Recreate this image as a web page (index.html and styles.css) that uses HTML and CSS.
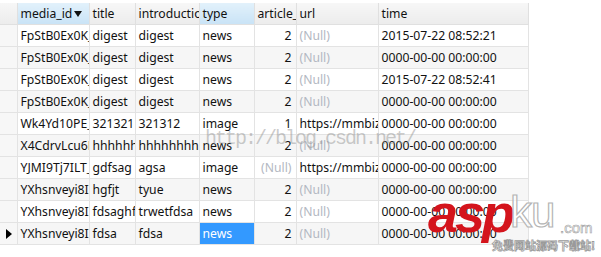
FILE: index.html
```html
<!DOCTYPE html>
<html lang="zh-CN">
<head>
    <meta charset="UTF-8">
    <title>wx_material</title>
    <link rel="stylesheet" href="styles.css">
</head>
<body>
    <div class="grid-view">
        <table class="data-grid">
            <colgroup>
                <col class="c-ind">
                <col class="c-media">
                <col class="c-title">
                <col class="c-intro">
                <col class="c-type">
                <col class="c-article">
                <col class="c-url">
                <col class="c-time">
                <col class="c-rest">
            </colgroup>
            <thead>
                <tr>
                    <th class="ind"></th>
                    <th class="sorted">media_id<span class="sort-arrow"></span></th>
                    <th>title</th>
                    <th>introduction</th>
                    <th class="sorted">type</th>
                    <th>article_id</th>
                    <th>url</th>
                    <th>time</th>
                    <th class="rest"></th>
                </tr>
            </thead>
            <tbody>
                <tr>
                    <td class="ind"></td><td>FpStB0Ex0K_sWq2</td><td>digest</td><td>digest</td><td>news</td>
                    <td class="num">2</td><td class="null">(Null)</td><td>2015-07-22 08:52:21</td><td class="rest"></td>
                </tr>
                <tr>
                    <td class="ind"></td><td>FpStB0Ex0K_sWq2</td><td>digest</td><td>digest</td><td>news</td>
                    <td class="num">2</td><td class="null">(Null)</td><td>0000-00-00 00:00:00</td><td class="rest"></td>
                </tr>
                <tr>
                    <td class="ind"></td><td>FpStB0Ex0K_sWq2</td><td>digest</td><td>digest</td><td>news</td>
                    <td class="num">2</td><td class="null">(Null)</td><td>2015-07-22 08:52:41</td><td class="rest"></td>
                </tr>
                <tr>
                    <td class="ind"></td><td>FpStB0Ex0K_sWq2</td><td>digest</td><td>digest</td><td>news</td>
                    <td class="num">2</td><td class="null">(Null)</td><td>0000-00-00 00:00:00</td><td class="rest"></td>
                </tr>
                <tr>
                    <td class="ind"></td><td>Wk4Yd10PE_x8s</td><td>321321</td><td>321312</td><td>image</td>
                    <td class="num">1</td><td>https://mmbiz.qpic.cn</td><td>0000-00-00 00:00:00</td><td class="rest"></td>
                </tr>
                <tr>
                    <td class="ind"></td><td>X4CdrvLcu6Hn</td><td>hhhhhh</td><td>hhhhhhhhhhhh</td><td>news</td>
                    <td class="num">2</td><td class="null">(Null)</td><td>0000-00-00 00:00:00</td><td class="rest"></td>
                </tr>
                <tr>
                    <td class="ind"></td><td>YJMI9Tj7ILT_q</td><td>gdfsag</td><td>agsa</td><td>image</td>
                    <td class="num null">(Null)</td><td>https://mmbiz.qpic.cn</td><td>0000-00-00 00:00:00</td><td class="rest"></td>
                </tr>
                <tr>
                    <td class="ind"></td><td>YXhsnveyi8IIm</td><td>hgfjt</td><td>tyue</td><td>news</td>
                    <td class="num">2</td><td class="null">(Null)</td><td>0000-00-00 00:00:00</td><td class="rest"></td>
                </tr>
                <tr>
                    <td class="ind"></td><td>YXhsnveyi8IIm</td><td>fdsaghfdsa</td><td>trwetfdsa</td><td>news</td>
                    <td class="num">2</td><td class="null">(Null)</td><td>0000-00-00 00:00:00</td><td class="rest"></td>
                </tr>
                <tr class="current">
                    <td class="ind"><span class="row-pointer"></span></td><td>YXhsnveyi8IIm</td><td>fdsa</td><td>fdsa</td><td class="selected">news</td>
                    <td class="num">2</td><td class="null">(Null)</td><td>0000-00-00 00:00:00</td><td class="rest"></td>
                </tr>
            </tbody>
        </table>

        <!-- marcas d'água por cima da grade -->
        <div class="wm-blog">http://blog.csdn.net/</div>
        <div class="wm-logo">
            <span class="asp">asp</span><span class="ku">ku</span><span class="com">.com</span>
            <div class="slogan">免费网站源码下载站!</div>
        </div>
    </div>
</body>
</html>
```

FILE: styles.css
```css
:root {
    --line: #e3e3e3;
    --alt-bg: #f6f6f6;
    --null-color: #b3b8c2;
    --select-bg: #3399ff;
}
body, html {
    margin: 0;
    padding: 0;
    background-color: #fff;
    font-family: 'Noto Sans', 'Noto Sans CJK SC', sans-serif;
    font-size: 12.2px;
    color: #111;
}
.grid-view {
    position: relative;
    width: 601px;
    height: 257px;
    padding-top: 3px;
    box-sizing: border-box;
    overflow: hidden;
    background-color: #fff;
}
.data-grid {
    table-layout: fixed;
    border-collapse: collapse;
    width: 601px;
}
.c-ind { width: 17px; }
.c-media { width: 72px; }
.c-title { width: 46px; }
.c-intro { width: 64px; }
.c-type { width: 55px; }
.c-article { width: 42px; }
.c-url { width: 82px; }
.c-time { width: 150px; }
.c-rest { width: 73px; }
.data-grid th,
.data-grid td {
    height: 21px;
    padding: 0 3px;
    border: 1px solid var(--line);
    white-space: nowrap;
    overflow: hidden;
    text-overflow: clip;
    text-align: left;
    font-weight: 400;
    line-height: 20px;
}
.data-grid th {
    background: linear-gradient(#f7f7f7, #ececec);
    border-color: #e0e0e0;
    border-top: 0;
}
.data-grid th.sorted {
    background: linear-gradient(#e2f1fb, #c9e3f6);
}
.sort-arrow {
    display: inline-block;
    margin-left: 2px;
    vertical-align: middle;
    border-left: 4px solid transparent;
    border-right: 4px solid transparent;
    border-top: 6px solid #111;
}
.data-grid .ind {
    padding: 0;
    background-color: #f7f7f7;
    border-left: 0;
}
.data-grid th.ind {
    background: linear-gradient(#f7f7f7, #ececec);
}
.data-grid .rest {
    border: 0;
    background: #fff !important;
}
.data-grid tbody tr:nth-child(even) td {
    background-color: var(--alt-bg);
}
.data-grid tbody tr td.ind {
    background-color: #f7f7f7;
}
.data-grid td.num {
    text-align: right;
    padding-right: 4px;
}
.data-grid td.null {
    color: var(--null-color);
}
.data-grid td.selected {
    background-color: var(--select-bg) !important;
    color: #fff;
}
.row-pointer {
    display: block;
    margin-left: 6px;
    width: 0;
    height: 0;
    border-top: 5px solid transparent;
    border-bottom: 5px solid transparent;
    border-left: 6px solid #000;
}
.wm-blog {
    position: absolute;
    left: 205px;
    top: 127px;
    font-family: 'Liberation Mono', monospace;
    font-size: 20px;
    letter-spacing: -2px;
    color: rgba(140, 140, 140, 0.45);
}
.wm-logo {
    position: absolute;
    left: 428px;
    top: 186px;
    width: 173px;
    height: 71px;
}
.wm-logo .asp {
    position: absolute;
    left: 0;
    top: 0;
    font-family: 'Liberation Sans', sans-serif;
    font-weight: 700;
    font-style: italic;
    font-size: 54px;
    line-height: 54px;
    letter-spacing: -3px;
    color: #d4141c;
}
.wm-logo .ku {
    position: absolute;
    left: 82px;
    top: 4px;
    font-family: 'Liberation Sans', sans-serif;
    font-size: 44px;
    line-height: 44px;
    letter-spacing: -1px;
    color: rgba(255, 255, 255, 0.7);
    -webkit-text-stroke: 1.2px #b4b4b4;
}
.wm-logo .com {
    position: absolute;
    left: 132px;
    top: 34px;
    font-family: 'Liberation Sans', sans-serif;
    font-size: 15px;
    line-height: 15px;
    color: rgba(255, 255, 255, 0.7);
    -webkit-text-stroke: 0.6px #a0a0a0;
}
.wm-logo .slogan {
    position: absolute;
    left: 64px;
    top: 53px;
    font-size: 11px;
    line-height: 13px;
    font-weight: 700;
    white-space: nowrap;
    color: #fff;
    -webkit-text-stroke: 0.8px #9a9a9a;
    font-family: 'Noto Sans CJK SC', sans-serif;
}
```
